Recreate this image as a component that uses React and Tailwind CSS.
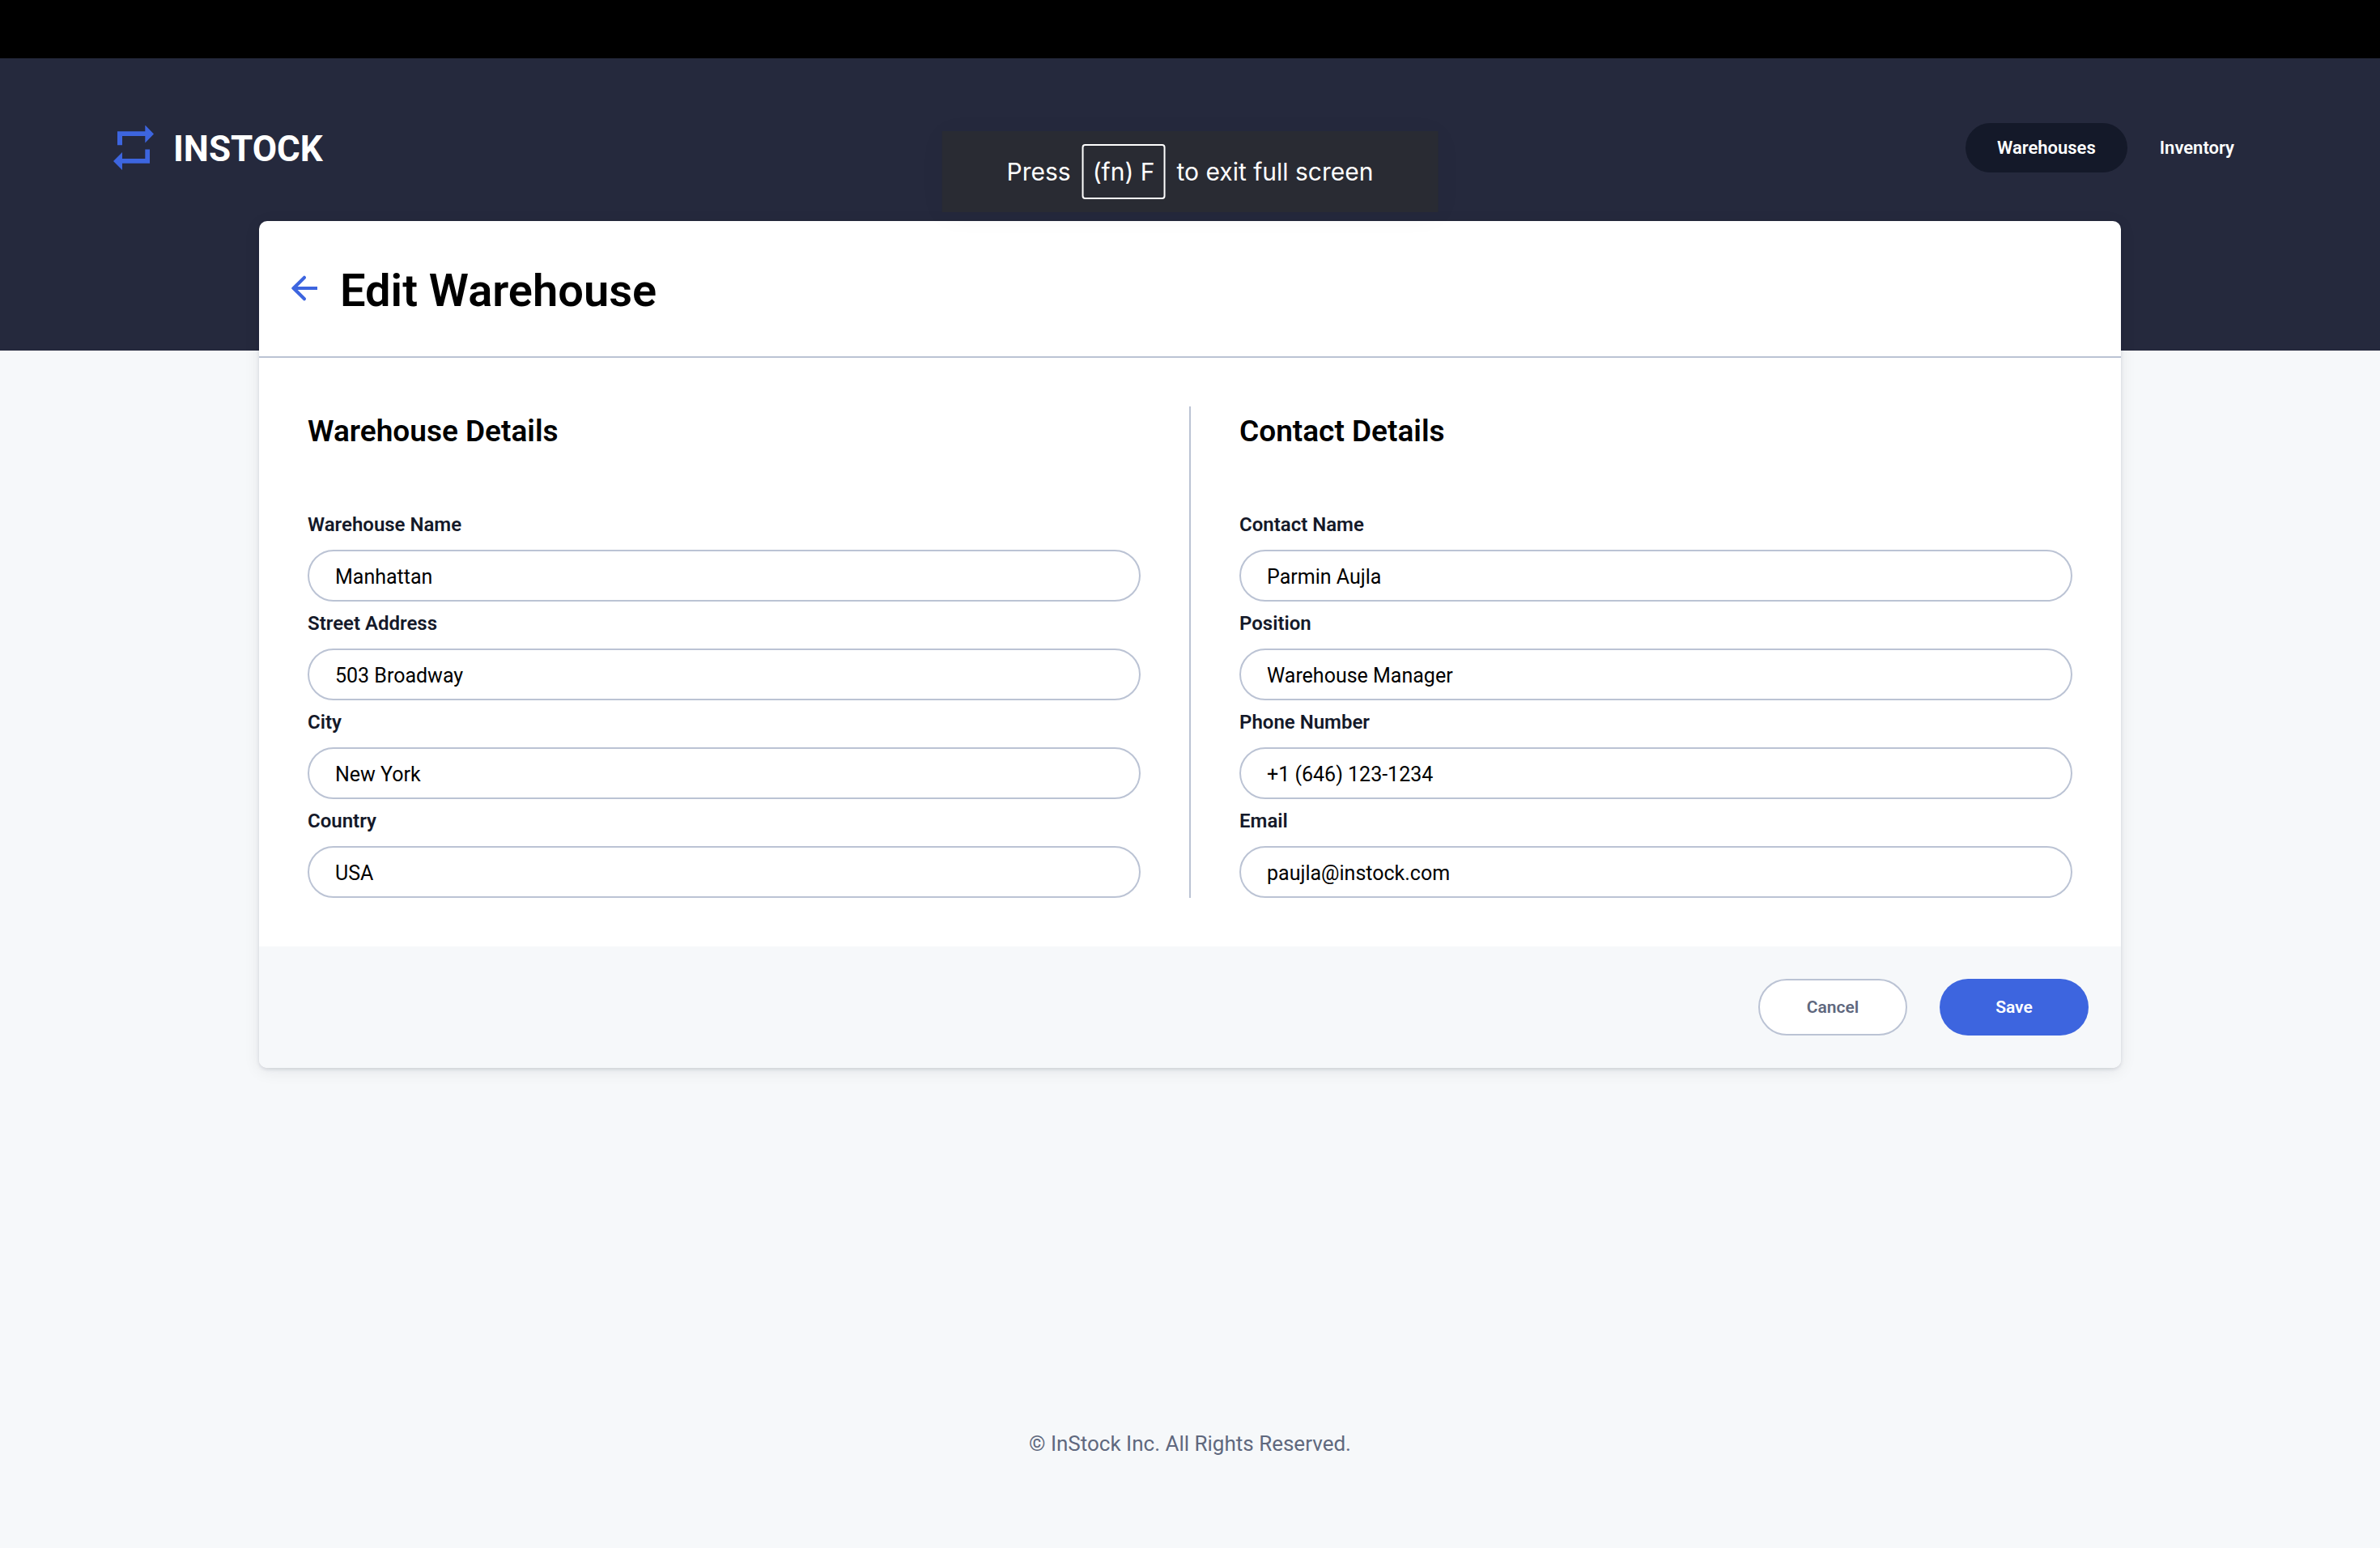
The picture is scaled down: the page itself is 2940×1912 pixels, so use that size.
const warehouseFields = [
  { id: 'warehouse-name', label: 'Warehouse Name', value: 'Manhattan' },
  { id: 'street-address', label: 'Street Address', value: '503 Broadway' },
  { id: 'city', label: 'City', value: 'New York' },
  { id: 'country', label: 'Country', value: 'USA' },
];

const contactFields = [
  { id: 'contact-name', label: 'Contact Name', value: 'Parmin Aujla' },
  { id: 'position', label: 'Position', value: 'Warehouse Manager' },
  { id: 'phone-number', label: 'Phone Number', value: '+1 (646) 123-1234', type: 'tel' },
  { id: 'email', label: 'Email', value: 'paujla@instock.com', type: 'email' },
];

function LogoMark() {
  return (
    <svg className="h-14 w-[50px]" viewBox="0 0 50 56" fill="#3d65df" aria-hidden="true">
      <path d="M5 7.3H39.3V-0.5L50 10.5L39.3 21.5V13H11V24.2H5Z" />
      <path d="M45 46.7H11V55L0 44L11 33V41H39.3V29.6H45Z" />
    </svg>
  );
}

function BackArrow() {
  return (
    <svg className="size-8" viewBox="4 4 16 16" fill="#3d65df" aria-hidden="true">
      <path d="M20 11H7.83l4.9-4.9c.4-.4.4-.9 0-1.3l-.1-.2c-.4-.4-.9-.4-1.3 0L4.3 11.5c-.3.3-.3.7 0 1l7.03 6.9c.4.4.9.4 1.3 0l.1-.2c.4-.4.4-.9 0-1.3L7.83 13H20z" />
    </svg>
  );
}

function Header() {
  return (
    <header className="bg-[#25293d] px-[140px] pt-20 pb-[220px]">
      <div className="flex items-center justify-between">
        <a href="#home" className="flex items-center gap-6 text-white">
          <LogoMark />
          <span className="pt-[2px] text-[44px] leading-[56px] font-bold">INSTOCK</span>
        </a>
        <nav className="flex items-center text-[22px] leading-[61px] font-semibold text-white">
          <a href="#warehouses" className="rounded-full bg-[#141929] px-[39px]">
            Warehouses
          </a>
          <a href="#inventory" className="rounded-full px-10">
            Inventory
          </a>
        </nav>
      </div>
    </header>
  );
}

function FieldGroup({ title, fields }) {
  return (
    <section className="min-w-0 flex-1">
      <h2 className="mb-[57px] text-[37px] leading-[62px] font-semibold text-black">{title}</h2>
      {fields.map((field) => (
        <div key={field.id}>
          <label
            htmlFor={field.id}
            className="block pt-[10px] pb-[14px] text-2xl leading-[34px] font-semibold text-[#141929]"
          >
            {field.label}
          </label>
          <input
            id={field.id}
            type={field.type || 'text'}
            defaultValue={field.value}
            className="block h-16 w-full rounded-full border-2 border-[#bbc3d4] bg-white px-8 pt-[2px] text-[25px] text-black outline-none"
          />
        </div>
      ))}
    </section>
  );
}

function FullScreenNotice() {
  return (
    <div className="absolute top-[162px] left-1/2 flex h-[100px] -translate-x-1/2 items-center gap-[14px] bg-[#292b33] px-20 font-['Inter',sans-serif] text-[30px] whitespace-nowrap text-white shadow-[0_4px_32px_rgba(0,0,20,0.04)]">
      <span>Press</span>
      <kbd className="rounded-[4px] border-2 border-white px-[11px] font-['Inter',sans-serif] leading-[64px]">
        (fn) F
      </kbd>
      <span>to exit full screen</span>
    </div>
  );
}

export default function App() {
  return (
    <div className="relative flex min-h-screen flex-col bg-[#f6f8fa] font-['Roboto',sans-serif]">
      <div className="h-[72px] bg-black" />
      <Header />

      <main className="mx-80 -mt-40 flex-1">
        <form className="overflow-hidden rounded-[10px] bg-white shadow-[0_2px_4px_rgba(19,24,44,0.12),0_4px_20px_rgba(19,24,44,0.08)]">
          <div className="flex items-start gap-7 border-b-2 border-[#bbc3d4] px-10 pt-[54px] pb-[49px]">
            <button type="button" aria-label="Back" className="flex h-[58px] items-center">
              <BackArrow />
            </button>
            <h1 className="text-[56px] leading-[64px] font-semibold text-black">Edit Warehouse</h1>
          </div>

          <div className="flex gap-[60px] p-[60px]">
            <FieldGroup title="Warehouse Details" fields={warehouseFields} />
            <div className="w-[2px] bg-[#bbc3d4]" />
            <FieldGroup title="Contact Details" fields={contactFields} />
          </div>

          <div className="flex justify-end gap-10 bg-[#f6f8fa] p-10 text-[21px] font-semibold">
            <button
              type="button"
              className="h-[70px] w-[184px] rounded-full border-2 border-[#bbc3d4] bg-white pt-[2px] text-[#5f687e]"
            >
              Cancel
            </button>
            <button type="button" className="h-[70px] w-[184px] rounded-full bg-[#3d65df] pt-[2px] text-white">
              Save
            </button>
          </div>
        </form>
      </main>

      <footer className="pb-28 text-center text-[26px] leading-[34px] text-[#5f687e]">
        © InStock Inc. All Rights Reserved.
      </footer>

      <FullScreenNotice />
    </div>
  );
}
